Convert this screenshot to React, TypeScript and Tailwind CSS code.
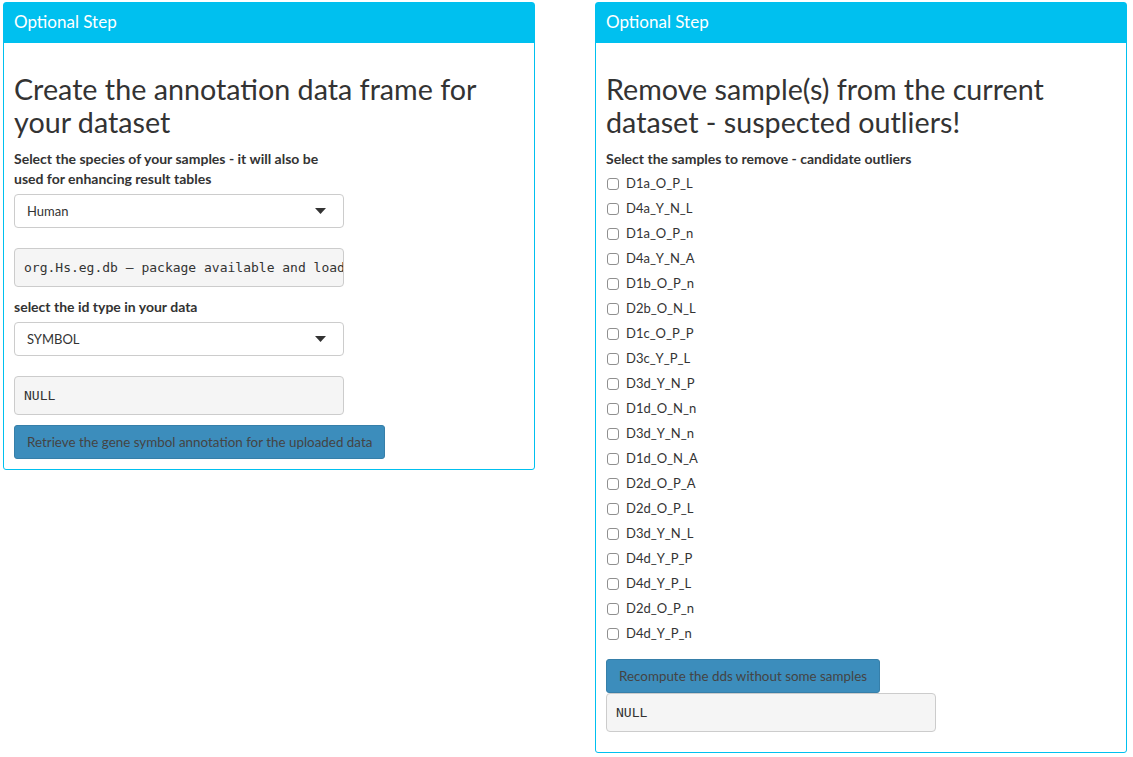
const samples = [
  "D1a_O_P_L",
  "D4a_Y_N_L",
  "D1a_O_P_n",
  "D4a_Y_N_A",
  "D1b_O_P_n",
  "D2b_O_N_L",
  "D1c_O_P_P",
  "D3c_Y_P_L",
  "D3d_Y_N_P",
  "D1d_O_N_n",
  "D3d_Y_N_n",
  "D1d_O_N_A",
  "D2d_O_P_A",
  "D2d_O_P_L",
  "D3d_Y_N_L",
  "D4d_Y_P_P",
  "D4d_Y_P_L",
  "D2d_O_P_n",
  "D4d_Y_P_n",
];

function Box({ children }: { children: React.ReactNode }) {
  return (
    <div className="w-[532px] rounded-[3px] border border-[#00c0ef] bg-white">
      <div className="flex h-[40px] items-center bg-[#00c0ef] px-[10px] pb-[2px] text-[17px] text-white">
        Optional Step
      </div>
      <div className="px-[10px] pb-[10px] pt-[10px]">{children}</div>
    </div>
  );
}

function Title({ children }: { children: React.ReactNode }) {
  return (
    <h2 className="mb-[10px] mt-[20px] text-[28.7px] leading-[33px] text-[#333]">
      {children}
    </h2>
  );
}

function Select({ value }: { value: string }) {
  return (
    <div className="flex h-[34px] w-[330px] items-center justify-between rounded-[4px] border border-[#ccc] bg-white pl-[12px] pr-[17px] text-[13px] text-[#333]">
      <span className="pt-[1px]">{value}</span>
      <svg width="11" height="6" viewBox="0 0 11 6">
        <path d="M0 0h11L5.5 6z" fill="#333" />
      </svg>
    </div>
  );
}

function Pre({ children }: { children: React.ReactNode }) {
  return (
    <div
      className="w-[330px] overflow-hidden whitespace-pre rounded-[4px] border border-[#ccc] bg-[#f5f5f5] px-[9px] py-[9px] text-[13px] leading-[19px] text-[#333]"
      style={{ fontFamily: '"DejaVu Sans Mono", monospace' }}
    >
      {children}
    </div>
  );
}

function Button({ children }: { children: React.ReactNode }) {
  return (
    <div className="flex h-[34px] w-fit items-center rounded-[3px] border border-[#367fa9] bg-[#3c8dbc] px-[12px] text-[13.4px] text-[#444]">
      {children}
    </div>
  );
}

export default function App() {
  return (
    <div
      className="flex min-h-[757px] gap-[60px] bg-white pl-[3px] pt-[2px]"
      style={{ fontFamily: "Lato, sans-serif" }}
    >
      <div>
        <Box>
          <Title>
            Create the annotation data frame for
            <br />
            your dataset
          </Title>
          <div className="mb-[5px] w-[330px] text-[14px] font-bold leading-[20px] text-[#333]">
            Select the species of your samples - it will also be used for
            enhancing result tables
          </div>
          <Select value="Human" />
          <div className="mt-[20px]">
            <Pre>org.Hs.eg.db – package available and loaded</Pre>
          </div>
          <div className="mb-[5px] mt-[10px] text-[14px] font-bold leading-[20px] text-[#333]">
            select the id type in your data
          </div>
          <Select value="SYMBOL" />
          <div className="mt-[20px]">
            <Pre>NULL</Pre>
          </div>
          <div className="mt-[10px]">
            <Button>Retrieve the gene symbol annotation for the uploaded data</Button>
          </div>
        </Box>
      </div>
      <div>
        <Box>
          <Title>
            Remove sample(s) from the current
            <br />
            dataset - suspected outliers!
          </Title>
          <div className="mb-[5px] text-[14px] font-bold leading-[20px] text-[#333]">
            Select the samples to remove - candidate outliers
          </div>
          <div className="flex flex-col gap-[5px]">
            {samples.map((s) => (
              <label
                key={s}
                className="flex h-[20px] items-center gap-[7px] pl-[1px] text-[13px] text-[#333]"
              >
                <span className="h-[12px] w-[12px] rounded-[3px] border border-[#8f8f8f] bg-white" />
                {s}
              </label>
            ))}
          </div>
          <div className="mt-[15px]">
            <Button>Recompute the dds without some samples</Button>
          </div>
          <Pre>NULL</Pre>
          <div className="h-[10px]" />
        </Box>
      </div>
    </div>
  );
}
